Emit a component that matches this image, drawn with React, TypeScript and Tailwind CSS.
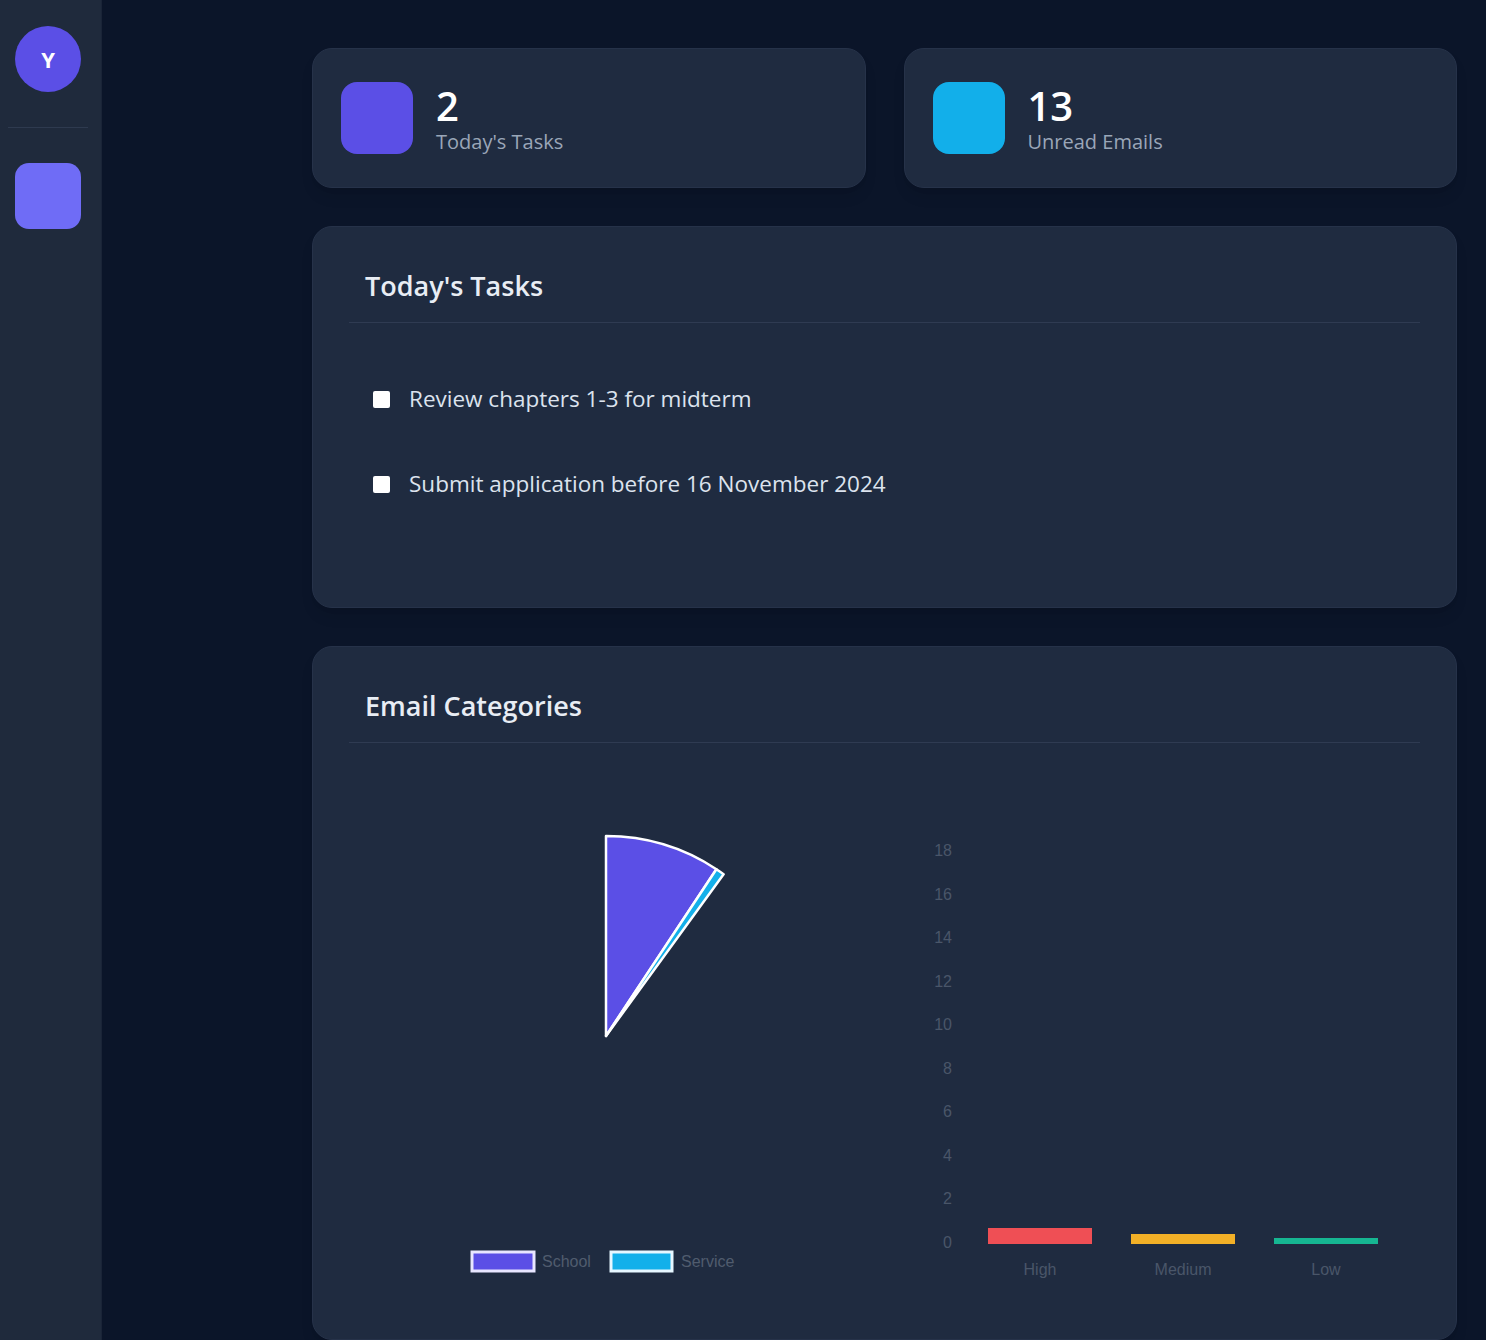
import React from "react";

const tasks = [
  "Review chapters 1-3 for midterm",
  "Submit application before 16 November 2024",
];

const yTicks = [18, 16, 14, 12, 10, 8, 6, 4, 2, 0];

const bars = [
  { label: "High", x: 87, top: 469, color: "#ef4f55" },
  { label: "Medium", x: 230, top: 475, color: "#f2b027" },
  { label: "Low", x: 373, top: 479, color: "#16b692" },
];

function StatCard({ value, label, color }: { value: string; label: string; color: string }) {
  return (
    <div className="flex h-[140px] flex-1 items-center gap-[23px] rounded-[20px] border border-[#263249] bg-[#1f2b40] pl-[28px] shadow-lg">
      <div className={`h-[72px] w-[72px] rounded-[16px] ${color}`} />
      <div className="flex flex-col pt-[4px]">
        <span className="text-[40px] font-semibold leading-[44px] text-white">{value}</span>
        <span className="text-[20px] leading-[28px] text-[#9aa6b8]">{label}</span>
      </div>
    </div>
  );
}

function Panel({ title, children }: { title: string; children: React.ReactNode }) {
  return (
    <div className="rounded-[20px] border border-[#263249] bg-[#1f2b40] px-9 pt-9 shadow-lg">
      <div className="border-b border-[#2f3b52] px-4 pb-[18px] pt-[5px]">
        <h2 className="text-[27px] font-semibold leading-[36px] text-[#e8edf4]">{title}</h2>
      </div>
      {children}
    </div>
  );
}

function PieChart() {
  return (
    <svg width="519" height="540" viewBox="0 0 519 540">
      <path d="M257,277 L257,77 A200,200 0 0 1 367.4,110.2 Z" fill="#5b4fe6" stroke="#ffffff" strokeWidth="2.5" strokeLinejoin="round" />
      <path d="M257,277 L367.4,110.2 A200,200 0 0 1 374.6,115.2 Z" fill="#13b0ea" stroke="#ffffff" strokeWidth="2.5" strokeLinejoin="round" />
      <rect x="123" y="493" width="62" height="19" fill="#5b4fe6" stroke="#e8e6ff" strokeWidth="3" />
      <text x="193" y="508" fontSize="16" fill="#505c6e" fontFamily="'Liberation Sans', Arial, sans-serif">School</text>
      <rect x="262" y="493" width="61" height="19" fill="#13b0ea" stroke="#e6f7ff" strokeWidth="3" />
      <text x="332" y="508" fontSize="16" fill="#505c6e" fontFamily="'Liberation Sans', Arial, sans-serif">Service</text>
    </svg>
  );
}

function BarChart() {
  const step = (483 - 91) / 9;
  return (
    <svg width="519" height="540" viewBox="0 0 519 540">
      {yTicks.map((t, i) => (
        <text
          key={t}
          x="51"
          y={91 + i * step + 6}
          textAnchor="end"
          fontSize="16"
          fill="#4a5669"
          fontFamily="'Liberation Sans', Arial, sans-serif"
        >
          {t}
        </text>
      ))}
      {bars.map((b) => (
        <g key={b.label}>
          <rect x={b.x} y={b.top} width="104" height={485 - b.top} fill={b.color} />
          <text
            x={b.x + 52}
            y="516"
            textAnchor="middle"
            fontSize="16"
            fill="#4a5669"
            fontFamily="'Liberation Sans', Arial, sans-serif"
          >
            {b.label}
          </text>
        </g>
      ))}
    </svg>
  );
}

export default function App() {
  return (
    <div className="flex min-h-screen bg-[#0b1529]" style={{ fontFamily: "'Open Sans', 'Noto Sans', sans-serif" }}>
      {/* Sidebar */}
      <aside className="flex w-[102px] shrink-0 flex-col items-start border-r border-[#1a2437] bg-[#1f2a3c] px-[15px] pt-[26px]">
        <div className="flex h-[66px] w-[66px] items-center justify-center rounded-full bg-[#5b4fe6] text-[22px] font-bold text-white">
          Y
        </div>
        <div className="-ml-[7px] mt-[35px] h-px w-[80px] bg-[#2e3a4f]" />
        <div className="mt-[35px] h-[66px] w-[66px] rounded-[14px] bg-[#6f6cf6]" />
      </aside>

      {/* Main */}
      <main className="flex flex-1 flex-col gap-[38px] pb-10 pl-[210px] pr-[29px] pt-[48px]">
        <div className="flex gap-[38px]">
          <StatCard value="2" label="Today's Tasks" color="bg-[#5b4fe6]" />
          <StatCard value="13" label="Unread Emails" color="bg-[#12afea]" />
        </div>

        <Panel title="Today's Tasks">
          <ul className="flex flex-col gap-[45px] px-6 pb-[103px] pt-[56px]">
            {tasks.map((t) => (
              <li key={t} className="flex h-[40px] items-center gap-[19px]">
                <span className="h-[17px] w-[17px] shrink-0 rounded-[2px] bg-white" />
                <span className="text-[22.5px] font-medium text-[#dce3ee]">{t}</span>
              </li>
            ))}
          </ul>
        </Panel>

        <Panel title="Email Categories">
          <div className="grid grid-cols-2 gap-8 pb-10 pt-4">
            <PieChart />
            <BarChart />
          </div>
        </Panel>
      </main>
    </div>
  );
}
